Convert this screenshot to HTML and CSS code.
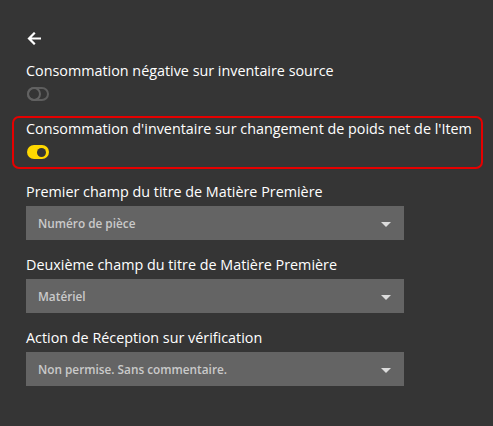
FILE: index.html
```html
<!DOCTYPE html>
<html lang="fr">
<head>
<meta charset="utf-8">
<link rel="stylesheet" href="styles.css">
</head>
<body>
<div class="page">
  <div class="back">
    <svg width="14" height="13" viewBox="0 0 14 13"><path d="M13 6.5H2.5M7 1.5L2 6.5l5 5" fill="none" stroke="#fff" stroke-width="2.2" stroke-linecap="square"/></svg>
  </div>
  <div class="setting first">
    <div class="label">Consommation négative sur inventaire source</div>
    <div class="toggle off"><span class="thumb"></span></div>
  </div>
  <div class="setting highlight">
    <div class="label">Consommation d'inventaire sur changement de poids net de l'Item</div>
    <div class="toggle on"><span class="thumb"></span></div>
  </div>
  <div class="field">
    <div class="label">Premier champ du titre de Matière Première</div>
    <div class="select"><span>Numéro de pièce</span><span class="caret"></span></div>
  </div>
  <div class="field">
    <div class="label">Deuxième champ du titre de Matière Première</div>
    <div class="select"><span>Matériel</span><span class="caret"></span></div>
  </div>
  <div class="field">
    <div class="label">Action de Réception sur vérification</div>
    <div class="select"><span>Non permise. Sans commentaire.</span><span class="caret"></span></div>
  </div>
</div>
</body>
</html>
```
FILE: styles.css
```css
html, body {
  margin: 0;
  padding: 0;
  background: #353535;
  height: 100%;
}
.page {
  font-family: "Open Sans", "Noto Sans", sans-serif;
  color: #ffffff;
  padding: 32px 10px 0 26px;
  display: flex;
  flex-direction: column;
}
.back {
  height: 13px;
  display: flex;
  align-items: center;
  margin-left: 1px;
}
.back svg { display: block; }
.label {
  font-size: 14.35px;
  line-height: 20px;
  white-space: nowrap;
}
.setting.first { margin-top: 16px; }
.setting .toggle { margin-top: 6px; margin-left: 1px; }
.highlight {
  margin: 15px 0 0 -14px;
  width: 471px;
  box-sizing: border-box;
  border: 2px solid #e60000;
  border-radius: 7px;
  padding: 1px 0 8px 12px;
}
.toggle {
  width: 22px;
  height: 14px;
  border-radius: 7px;
  box-sizing: border-box;
  position: relative;
}
.toggle.off {
  border: 2px solid #5e5e5e;
}
.toggle.off .thumb {
  position: absolute;
  left: -2px;
  top: -2px;
  width: 14px;
  height: 14px;
  border-radius: 50%;
  box-sizing: border-box;
  border: 2px solid #626262;
}
.toggle.on {
  background: #ffd800;
}
.toggle.on .thumb {
  position: absolute;
  right: 3px;
  top: 2.5px;
  width: 9px;
  height: 9px;
  border-radius: 50%;
  background: #353535;
}
.field { margin-top: 13px; }
.field + .field { margin-top: 15px; }
.select {
  margin-top: 4px;
  width: 378px;
  height: 34px;
  background: #646464;
  display: flex;
  align-items: center;
  justify-content: space-between;
  padding: 0 13px 0 12px;
  box-sizing: border-box;
  color: #cacaca;
  font-size: 11.8px;
  font-weight: 600;
}
.caret {
  width: 0;
  height: 0;
  border-left: 5px solid transparent;
  border-right: 5px solid transparent;
  border-top: 5px solid #dcdcdc;
  margin-top: 2px;
}
```
